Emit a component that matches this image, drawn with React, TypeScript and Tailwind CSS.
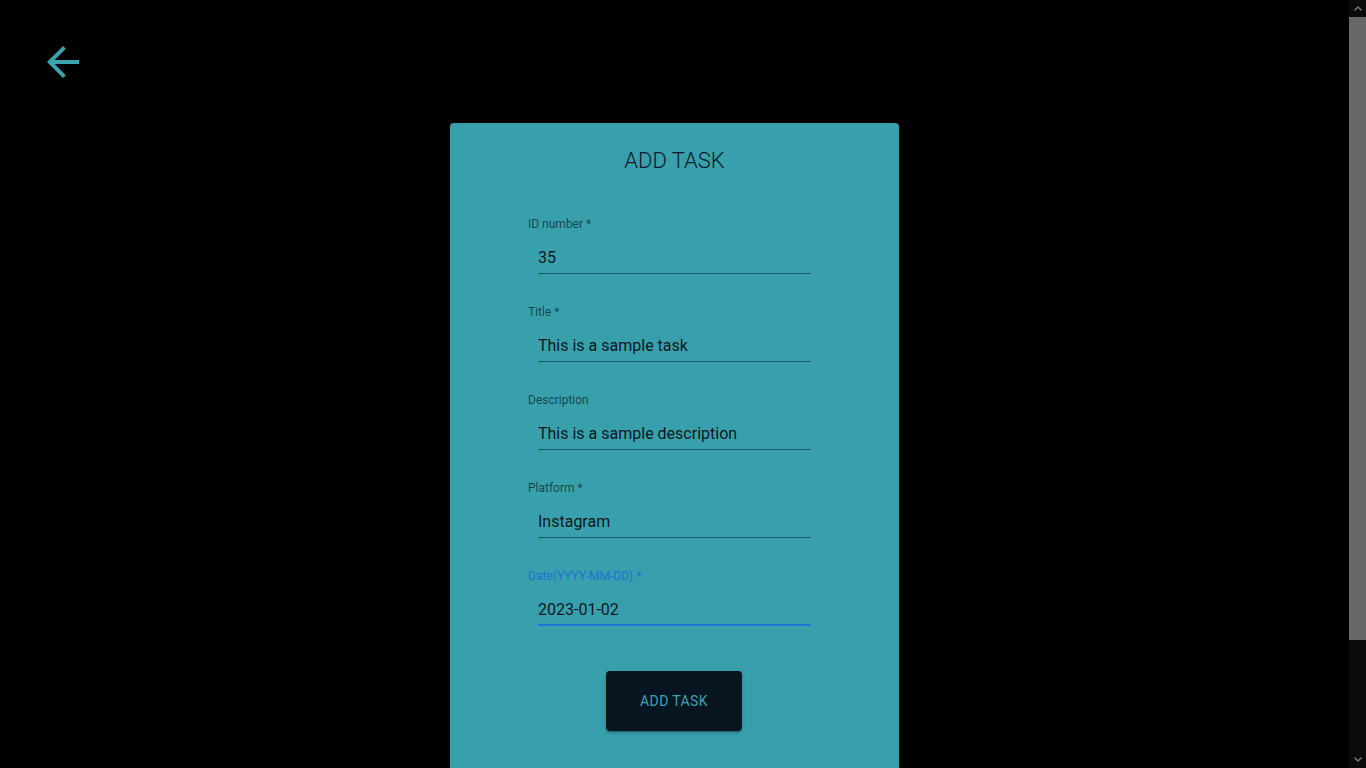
import { useState } from "react";

type Field = {
	label: string;
	value: string;
	required?: boolean;
	focused?: boolean;
};

const fields: Field[] = [
	{ label: "ID number", value: "35", required: true },
	{ label: "Title", value: "This is a sample task", required: true },
	{ label: "Description", value: "This is a sample description" },
	{ label: "Platform", value: "Instagram", required: true },
	{ label: "Date(YYYY-MM-DD)", value: "2023-01-02", required: true, focused: true },
];

const BackArrow = () => (
	<svg viewBox="0 0 24 24" className="size-12 fill-[#3aa3b1]">
		<path d="M20 11H7.83l5.59-5.59L12 4l-8 8 8 8 1.41-1.41L7.83 13H20v-2z" />
	</svg>
);

const TextInput = ({ label, value, required, focused }: Field) => {
	const [val, setVal] = useState(value);
	return (
		<div className="flex flex-col">
			<label
				className={`mt-[3px] text-xs leading-4 ${focused ? "text-[#1976d2]" : "text-black/60"}`}
			>
				{label}
				{required && " *"}
			</label>
			<div
				className={`ml-[10px] mt-[13px] w-[273px] pt-px ${
					focused ? "border-b-2 border-[#1976d2] pb-[2px]" : "border-b border-black/45 pb-[3px]"
				}`}
			>
				<input
					className="w-full bg-transparent text-base leading-6 text-black/87 outline-none"
					value={val}
					onChange={(e) => setVal(e.currentTarget.value)}
				/>
			</div>
		</div>
	);
};

// the reference shows the browser's dark classic scrollbar, drawn here by hand
const Scrollbar = () => (
	<div className="flex w-[17px] shrink-0 flex-col bg-[#0b0b0e]">
		<div className="flex h-[17px] items-center justify-center">
			<svg viewBox="0 0 8 5" className="h-[5px] w-2 fill-none stroke-[#7c7c80] stroke-[1.4]">
				<path d="M0.5 4.5L4 1l3.5 3.5" />
			</svg>
		</div>
		<div className="h-[623px] bg-[#686868]" />
		<div className="flex-1" />
		<div className="flex h-[17px] items-center justify-center">
			<svg viewBox="0 0 8 5" className="h-[5px] w-2 fill-none stroke-[#7c7c80] stroke-[1.4]">
				<path d="M0.5 0.5L4 4l3.5-3.5" />
			</svg>
		</div>
	</div>
);

export default function App() {
	return (
		<div className="flex h-screen overflow-hidden bg-black font-['Roboto',sans-serif]">
			<div className="flex-1 overflow-hidden">
				<div className="pl-[39px] pt-[38px]">
					<button className="block">
						<BackArrow />
					</button>
				</div>
				<div className="mx-auto mt-[37px] w-[449px] rounded bg-[#38a0ad] pb-[119px] pt-[22px]">
					<h2 className="text-center text-[22px] font-light leading-8 text-[#081a29]">
						ADD TASK
					</h2>
					<form
						className="mt-[36px] flex flex-col gap-[27px] pl-[78px]"
						onSubmit={(e) => e.preventDefault()}
					>
						{fields.map((f) => (
							<TextInput key={f.label} {...f} />
						))}
					</form>
					<div className="mt-[45px] flex justify-center pr-px">
						<button className="h-[60px] w-[136px] rounded bg-[#061520] text-sm font-normal tracking-[0.4px] text-[#3aa3b1] shadow-[0_3px_1px_-2px_rgba(0,0,0,0.2),0_2px_2px_0_rgba(0,0,0,0.14),0_1px_5px_0_rgba(0,0,0,0.12)]">
							ADD TASK
						</button>
					</div>
				</div>
			</div>
			<Scrollbar />
		</div>
	);
}
